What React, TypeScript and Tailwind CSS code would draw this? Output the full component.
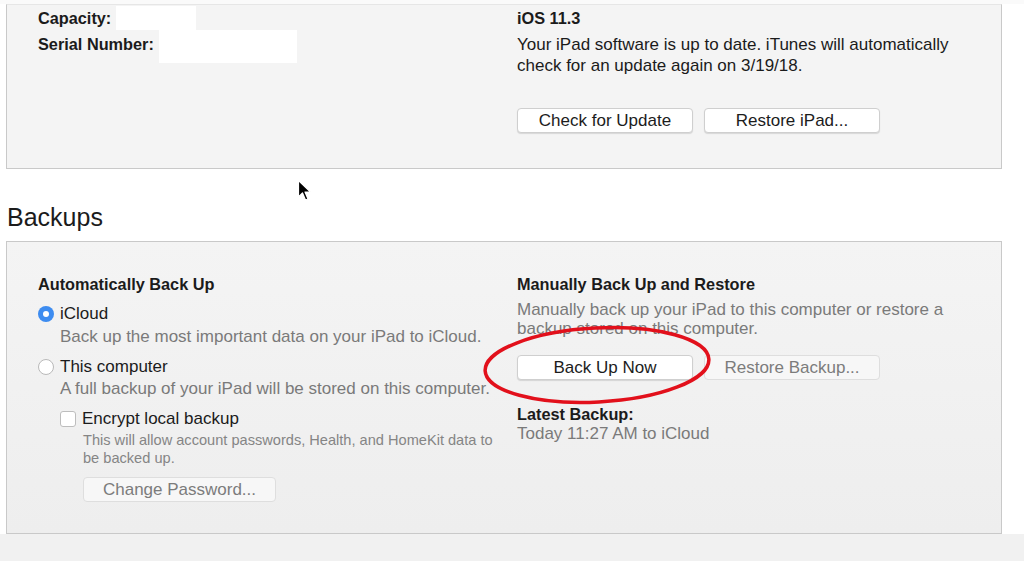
import React from "react";

const font = { fontFamily: '"Liberation Sans", Arial, sans-serif' };

const MacButton = ({
  label,
  disabled = false,
  width = "w-[176px]",
}: {
  label: string;
  disabled?: boolean;
  width?: string;
}) => (
  <button
    className={`${width} h-[25px] rounded-[4px] border text-[17px] leading-[23px] ${
      disabled
        ? "border-[#dedede] bg-[#f7f7f7] text-[#7c7c7c]"
        : "border-[#cfcfcf] bg-white text-[#1c1c1c] shadow-[0_1px_1px_rgba(0,0,0,0.12)]"
    }`}
  >
    {label}
  </button>
);

const Radio = ({ checked }: { checked: boolean }) =>
  checked ? (
    <span className="flex h-[16px] w-[16px] items-center justify-center rounded-full bg-[#3d8cf0]">
      <span className="h-[6px] w-[6px] rounded-full bg-white" />
    </span>
  ) : (
    <span className="h-[16px] w-[16px] rounded-full border border-[#b9b9b9] bg-white" />
  );

export default function App() {
  return (
    <div
      className="relative h-[561px] w-[1024px] overflow-hidden bg-white text-[#1b1b1b]"
      style={font}
    >
      <div className="h-[4px] bg-[#fafafa]" />
      {/* software panel */}
      <div className="ml-[6px] flex h-[165px] w-[996px] border-x border-b border-t border-[#c9c9c9] border-t-[#e6e6e6] bg-[#f4f4f4]">
        <div className="w-[510px] pl-[31px] pt-[1px]">
          <div className="flex h-[24px] items-start">
            <span className="text-[16.3px] font-bold leading-[24px]">Capacity:</span>
            <span className="ml-[5px] h-[24px] w-[80px] bg-white" />
          </div>
          <div className="flex items-start">
            <span className="text-[16.3px] font-bold leading-[28px]">Serial Number:</span>
            <span className="ml-[5px] h-[33px] w-[138px] bg-white" />
          </div>
        </div>
        <div className="flex-1 pt-[3px]">
          <div className="text-[16.3px] font-bold leading-[21px]">iOS 11.3</div>
          <p className="mt-[5px] w-[450px] text-[17px] leading-[21px]">
            Your iPad software is up to date. iTunes will automatically check for an update again on 3/19/18.
          </p>
          <div className="mt-[32px] flex gap-[11px]">
            <MacButton label="Check for Update" />
            <MacButton label="Restore iPad..." />
          </div>
        </div>
      </div>

      <h2 className="pl-[7px] pt-[36px] text-[25px] font-normal leading-[24px]">Backups</h2>

      {/* backups panel */}
      <div className="ml-[6px] mt-[12px] flex h-[293px] w-[996px] border border-[#c9c9c9] bg-gradient-to-b from-[#f4f4f4] to-[#eeeeee]">
        <div className="w-[510px] pl-[31px]">
          <div className="mt-[31px] text-[16.3px] font-bold leading-[22px]">Automatically Back Up</div>
          <div className="mt-[8px] flex items-center gap-[6px] text-[17px] leading-[22px]">
            <Radio checked />
            <span>iCloud</span>
          </div>
          <div className="mt-[1px] pl-[22px] text-[17px] leading-[22px] text-[#7a7a7a]">
            Back up the most important data on your iPad to iCloud.
          </div>
          <div className="mt-[8px] flex items-center gap-[6px] text-[17px] leading-[22px]">
            <Radio checked={false} />
            <span>This computer</span>
          </div>
          <div className="whitespace-nowrap pl-[22px] text-[17px] leading-[22px] text-[#7a7a7a]">
            A full backup of your iPad will be stored on this computer.
          </div>
          <div className="mt-[8px] flex items-center gap-[6px] pl-[22px] text-[17px] leading-[22px]">
            <span className="h-[16px] w-[16px] rounded-[3px] border border-[#bdbdbd] bg-white" />
            <span>Encrypt local backup</span>
          </div>
          <p className="mt-[1px] w-[462px] pl-[45px] text-[14.6px] leading-[18px] text-[#858585]">
            This will allow account passwords, Health, and HomeKit data to be backed up.
          </p>
          <div className="mt-[10px] pl-[45px]">
            <MacButton label="Change Password..." disabled width="w-[193px]" />
          </div>
        </div>
        <div className="flex-1">
          <div className="mt-[31px] text-[16.3px] font-bold leading-[22px]">Manually Back Up and Restore</div>
          <p className="mt-[5px] w-[450px] text-[17px] leading-[19px] text-[#7a7a7a]">
            Manually back up your iPad to this computer or restore a backup stored on this computer.
          </p>
          <div className="mt-[17px] flex gap-[11px]">
            <MacButton label="Back Up Now" />
            <MacButton label="Restore Backup..." disabled />
          </div>
          <div className="mt-[24px] text-[16.3px] font-bold leading-[20px]">Latest Backup:</div>
          <div className="text-[17px] leading-[20px] text-[#7a7a7a]">Today 11:27 AM to iCloud</div>
        </div>
      </div>
      <div className="h-full bg-[#f1f1f1]" />

      {/* red annotation */}
      <svg className="pointer-events-none absolute left-0 top-0" width="1024" height="561">
        <ellipse
          cx="597"
          cy="365"
          rx="112"
          ry="37"
          transform="rotate(-3 597 365)"
          fill="none"
          stroke="#e2101b"
          strokeWidth="3.5"
        />
      </svg>

      {/* cursor */}
      <svg className="absolute left-[297px] top-[179px]" width="16" height="24" viewBox="0 0 16 24">
        <path
          d="M1.5 1.5 L1.5 18 L5.5 14 L8.5 21 L11 20 L8 13 L13.5 13 Z"
          fill="#000"
          stroke="#fff"
          strokeWidth="1.2"
          strokeLinejoin="round"
        />
      </svg>
    </div>
  );
}
